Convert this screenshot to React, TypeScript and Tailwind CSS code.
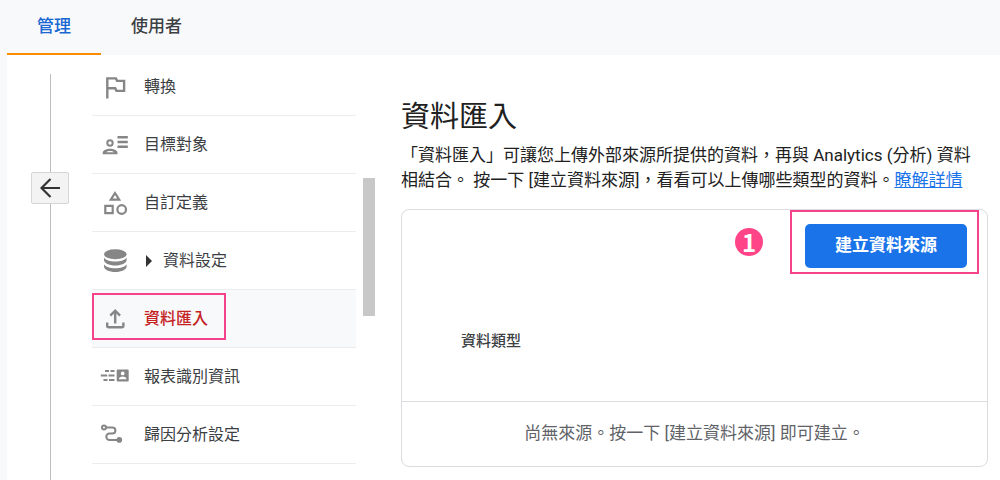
import React from 'react'

interface NavItem {
  id: string
  label: string
  icon: React.ReactNode
  expandable?: boolean
  active?: boolean
}

const Icon = ({ children }: { children: React.ReactNode }) => (
  <svg
    viewBox="0 0 30 30"
    className="size-[30px] shrink-0"
    fill="#868686"
    aria-hidden="true"
  >
    {children}
  </svg>
)

const NAV_ITEMS: NavItem[] = [
  {
    id: 'conversions',
    label: '轉換',
    icon: (
      <Icon>
        <path
          d="M7.3 26.5V6.4h8.6l1.2 2.5h7v10h-7.6l-1.3-2.6H7.3"
          fill="none"
          stroke="#868686"
          strokeWidth="2.4"
        />
      </Icon>
    ),
  },
  {
    id: 'audiences',
    label: '目標對象',
    icon: (
      <Icon>
        <circle cx="10" cy="13" r="2.7" fill="none" stroke="#868686" strokeWidth="2" />
        <path
          fillRule="evenodd"
          d="M2.7 24.3v-1.6c0-2.6 4.6-3.9 7.4-3.9s7.4 1.3 7.4 3.9v1.6zM6 22.3h8.2c-1-.8-2.6-1.3-4.1-1.3s-3.2.5-4.1 1.3z"
        />
        <path d="M17.5 6h10.3v2.5H17.5zM17.5 10.7h10.3v2.5H17.5zM17.5 15.4h10.3v2.5H17.5z" />
      </Icon>
    ),
  },
  {
    id: 'definitions',
    label: '自訂定義',
    icon: (
      <Icon>
        <g fill="none" stroke="#868686" strokeWidth="2.2">
          <path d="M15 5l4.2 6.7h-8.4z" />
          <path d="M5.3 17.8h7.4v7.4H5.3z" />
          <circle cx="21.7" cy="21.5" r="4.3" />
        </g>
      </Icon>
    ),
  },
  {
    id: 'settings',
    label: '資料設定',
    expandable: true,
    icon: (
      <Icon>
        <ellipse cx="15.3" cy="8.3" rx="11.3" ry="5" />
        <path d="M4 11.5c1.5 2.6 6 4 11.3 4s9.8-1.4 11.3-4v2.5c0 3-5 5.5-11.3 5.5S4 17 4 14z" />
        <path d="M4 18.2c1.5 2.6 6 4 11.3 4s9.8-1.4 11.3-4v2.3c0 3-5 5.5-11.3 5.5S4 23.5 4 20.5z" />
      </Icon>
    ),
  },
  {
    id: 'import',
    label: '資料匯入',
    active: true,
    icon: (
      <Icon>
        <g fill="none" stroke="#868686" strokeWidth="2.4">
          <path d="M15.2 19.5V7M10.3 11.6l4.9-4.9 4.9 4.9" />
          <path d="M7.2 18.5v3.2q0 1.5 1.5 1.5h13.2q1.5 0 1.5-1.5v-3.2" />
        </g>
      </Icon>
    ),
  },
  {
    id: 'identity',
    label: '報表識別資訊',
    icon: (
      <Icon>
        <path d="M5 8h4v2H5zM10.5 8h4v2h-4zM.8 12.5h6.4v2H.8zM8.5 12.5h6v2h-6zM3.5 17h4v2h-4zM9 17h5.5v2H9z" />
        <path
          fillRule="evenodd"
          d="M17.7 7.5h10q1 0 1 1v10q0 1-1 1h-10q-1 0-1-1v-10q0-1 1-1zM22.7 9.5a1.9 1.9 0 1 0 0 3.8a1.9 1.9 0 1 0 0-3.8zM19 17.3h7.4v-.8c0-1.3-2.4-2.1-3.7-2.1s-3.7.8-3.7 2.1z"
        />
      </Icon>
    ),
  },
  {
    id: 'attribution',
    label: '歸因分析設定',
    icon: (
      <Icon>
        <g fill="none" stroke="#868686" strokeWidth="2">
          <circle cx="4" cy="7.5" r="2" />
          <path d="M6 7.5h6.4a3 3 0 0 1 0 6H9.5a3.2 3.2 0 0 0 0 6.4H18" />
        </g>
        <circle cx="19.3" cy="19.9" r="2.8" />
      </Icon>
    ),
  },
]

const Tabs = () => (
  <nav className="flex h-[55px] pl-[7px] text-[17px] font-medium">
    <a
      href="#admin"
      className="flex items-center border-b-2 border-[#fb8c00] px-[30px] text-[#1967d2]"
    >
      管理
    </a>
    <a
      href="#users"
      className="flex items-center border-b-2 border-transparent px-[30px] text-[#3c4043]"
    >
      使用者
    </a>
  </nav>
)

const Rail = () => (
  <div className="flex w-[38px] shrink-0 flex-col items-center pt-[19px]">
    <div className="h-[98px] w-px bg-[#bdbdbd]" />
    <button
      type="button"
      aria-label="返回"
      className="flex h-8 w-full items-center justify-center rounded-xs border border-[#d6d6d6] bg-[#f3f3f3]"
    >
      <svg
        viewBox="0 0 20 20"
        className="size-5"
        fill="none"
        stroke="#333"
        strokeWidth="2.2"
        aria-hidden="true"
      >
        <path d="M20 10H1.5M10.5 1L1.5 10l9 9" />
      </svg>
    </button>
    <div className="w-px flex-1 bg-[#bdbdbd]" />
  </div>
)

const SideNav = () => (
  <ul className="w-[264px] shrink-0 pt-[3px]">
    {NAV_ITEMS.map((item) => (
      <li
        key={item.id}
        className={`relative h-[58px] border-b border-[#ebeced] ${item.active ? 'bg-[#f8f9fb]' : ''}`}
      >
        <a
          href={`#${item.id}`}
          className={`flex h-full items-center gap-[14px] pl-2 text-base ${
            item.active ? 'font-medium text-[#c5221f]' : 'text-[#3c4043]'
          }`}
        >
          {item.icon}
          <span className="flex items-center gap-[11px]">
            {item.expandable && (
              <svg viewBox="0 0 8 12" className="h-3 w-2" fill="#333" aria-hidden="true">
                <path d="M2 0l6 6-6 6z" />
              </svg>
            )}
            {item.label}
          </span>
        </a>
        {item.active && (
          <div className="pointer-events-none absolute top-[3px] left-0 h-[47px] w-[134px] border-2 border-[#f5428a]" />
        )}
      </li>
    ))}
  </ul>
)

const SourcesCard = () => (
  <section className="mt-4 rounded-lg border border-[#dadce0]">
    <div className="flex justify-end py-[14px] pr-5">
      <div className="relative">
        <button
          type="button"
          className="h-11 rounded-[5px] bg-[#1a73e8] px-[30px] text-[17px] font-bold text-white"
        >
          建立資料來源
        </button>
        <div className="pointer-events-none absolute -top-[14px] -right-3 -bottom-[6px] -left-[15px] border-2 border-[#f5428a]">
          <span className="absolute top-1/2 right-full mr-[29px] flex size-7 -translate-y-1/2 items-center justify-center rounded-full bg-[#ff4488] font-['Noto_Sans_CJK_TC',sans-serif] text-2xl font-bold text-white">
            1
          </span>
        </div>
      </div>
    </div>
    <table className="w-full border-collapse">
      <thead>
        <tr>
          <th
            scope="col"
            className="h-[119px] pl-[59px] text-left text-[15px] font-medium text-[#3c4043]"
          >
            資料類型
          </th>
        </tr>
      </thead>
      <tbody>
        <tr>
          <td className="h-[65px] border-t border-[#dadce0] text-center text-[17px] text-[#5f6368]">
            尚無來源。按一下 [建立資料來源] 即可建立。
          </td>
        </tr>
      </tbody>
    </table>
  </section>
)

export default function App() {
  return (
    <div
      lang="zh-Hant"
      className="flex min-h-screen flex-col bg-[#f8f9fb] font-['Roboto','Noto_Sans_CJK_TC',sans-serif]"
    >
      <Tabs />
      <div className="ml-[7px] flex flex-1 bg-white pl-6">
        <Rail />
        <div className="ml-[23px] flex">
          <SideNav />
          <div className="mt-[123px] ml-[7px] h-[138px] w-3 bg-[#c8c8c8]" />
        </div>
        <main className="min-w-0 flex-1 pt-[42px] pr-3 pb-3 pl-[26px]">
          <h1 className="text-[29px] leading-10 text-[#212121]">資料匯入</h1>
          <p className="mt-[6px] pr-2 text-[17px] leading-[25px] text-[#212121]">
            「資料匯入」可讓您上傳外部來源所提供的資料，再與 Analytics (分析) 資料相結合。
            按一下 [建立資料來源]，看看可以上傳哪些類型的資料。
            <a href="#learn-more" className="inline-block text-[#1a73e8] underline">
              瞭解詳情
            </a>
          </p>
          <SourcesCard />
        </main>
      </div>
    </div>
  )
}
